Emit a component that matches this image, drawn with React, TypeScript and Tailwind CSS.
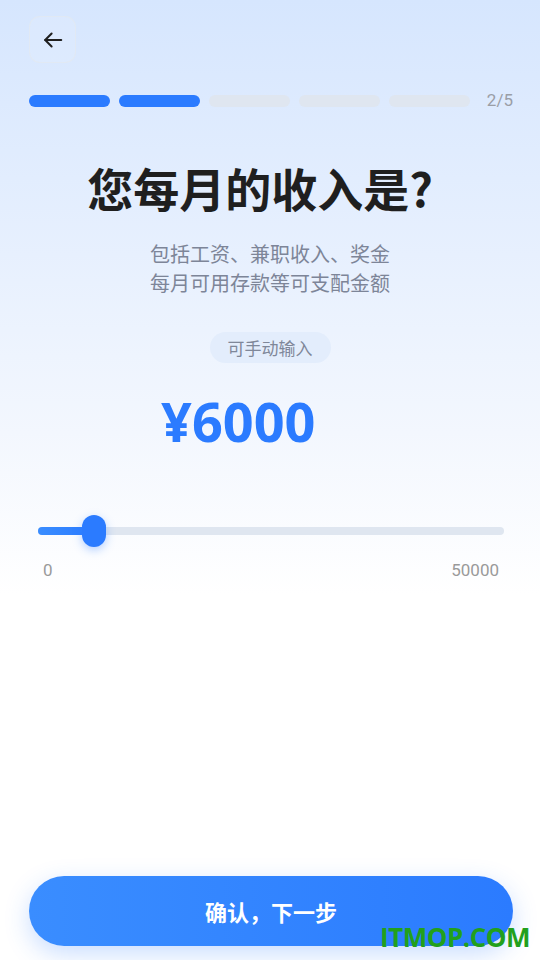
import { useState } from 'react'

const FONT = { fontFamily: '"Noto Sans CJK SC", "Noto Sans", Roboto, sans-serif' }

function BackIcon() {
    return (
        <svg width="22" height="22" viewBox="0 0 24 24" fill="none" stroke="#1f1f1f" strokeWidth="2.2" strokeLinecap="round" strokeLinejoin="round">
            <path d="M21 12H3.5" />
            <path d="M10.5 5L3.5 12L10.5 19" />
        </svg>
    )
}

export default function App() {
    const [step] = useState(2)
    const [amount] = useState(6000)
    const max = 50000
    const pct = (amount / max) * 100

    return (
        <div
            className="relative w-[540px] h-[960px] overflow-hidden flex flex-col bg-[linear-gradient(to_bottom,#d6e6fe_0%,#f3f7fe_45%,#ffffff_62%,#ffffff_100%)]"
            style={FONT}
        >
            {/* header */}
            <div className="pt-[16px] px-[29px]">
                <button
                    type="button"
                    className="w-[47px] h-[47px] rounded-[11px] border border-[#e2e8f0]/70 bg-white/10 flex items-center justify-center"
                >
                    <BackIcon />
                </button>
            </div>

            {/* progress */}
            <div className="mt-[29px] pl-[29px] pr-[27px] flex items-center">
                <div className="flex gap-[9px]">
                    {[1, 2, 3, 4, 5].map((i) => (
                        <div
                            key={i}
                            className={
                                i <= step
                                    ? 'w-[81px] h-[12px] rounded-full bg-[#2b7bff]'
                                    : 'w-[81px] h-[12px] rounded-full bg-[#dfe6f0]'
                            }
                        />
                    ))}
                </div>
                <span className="ml-auto text-[17px] text-[#9a9ea6] leading-none" style={{ fontFamily: 'Roboto, sans-serif' }}>
                    {step}/5
                </span>
            </div>

            {/* title */}
            <h1 className="mt-[50px] text-center text-[46px] font-bold text-[#1f1f1f] leading-[56px] pr-[20px]">
                您每月的收入是?
            </h1>
            <div className="mt-[24px] text-center text-[20px] leading-[29px] text-[#7d8598]">
                <p>包括工资、兼职收入、奖金</p>
                <p>每月可用存款等可支配金额</p>
            </div>

            <div className="mt-[35px] flex justify-center">
                <span className="px-[18px] h-[31px] rounded-full bg-[#e3edfc] text-[17px] text-[#7f8799] flex items-center">
                    可手动输入
                </span>
            </div>

            <div className="mt-[25px] pl-[161px] text-[54px] font-bold text-[#2b7bff] leading-[66px]" style={{ fontFamily: '"Open Sans", sans-serif' }}>
                ¥{amount}
            </div>

            {/* slider */}
            <div className="mt-[73px] pl-[38px] pr-[36px]">
                <div className="relative h-[8px] rounded-full bg-[#dfe6f0]">
                    <div className="absolute left-0 top-0 h-full rounded-full bg-gradient-to-r from-[#3a8dff] to-[#2b7bff]" style={{ width: `${pct}%` }} />
                    <div
                        className="absolute top-1/2 -translate-y-1/2 -translate-x-1/2 w-[24px] h-[32px] rounded-full bg-[#2b7bff] shadow-[0_3px_10px_rgba(43,123,255,0.35)]"
                        style={{ left: `${pct}%` }}
                    />
                </div>
                <div className="mt-[27px] flex justify-between text-[17px] text-[#9a9a9a] leading-none pl-[5px] pr-[5px]" style={{ fontFamily: 'Roboto, sans-serif' }}>
                    <span>0</span>
                    <span>{max}</span>
                </div>
            </div>

            {/* bottom button */}
            <div className="mt-auto pl-[29px] pr-[27px] pb-[14px]">
                <button
                    type="button"
                    className="w-full h-[70px] rounded-full bg-gradient-to-r from-[#3a8dff] to-[#2b7bff] text-white text-[22px] font-bold shadow-[0_8px_24px_rgba(43,123,255,0.25)]"
                >
                    确认，下一步
                </button>
            </div>

            {/* watermark */}
            <div
                className="absolute right-[10px] bottom-[10px] text-[26px] font-bold text-[#22a01c] leading-none tracking-[-0.5px]"
                style={{ fontFamily: '"Open Sans", sans-serif' }}
            >
                ITMOP.COM
            </div>
        </div>
    )
}
